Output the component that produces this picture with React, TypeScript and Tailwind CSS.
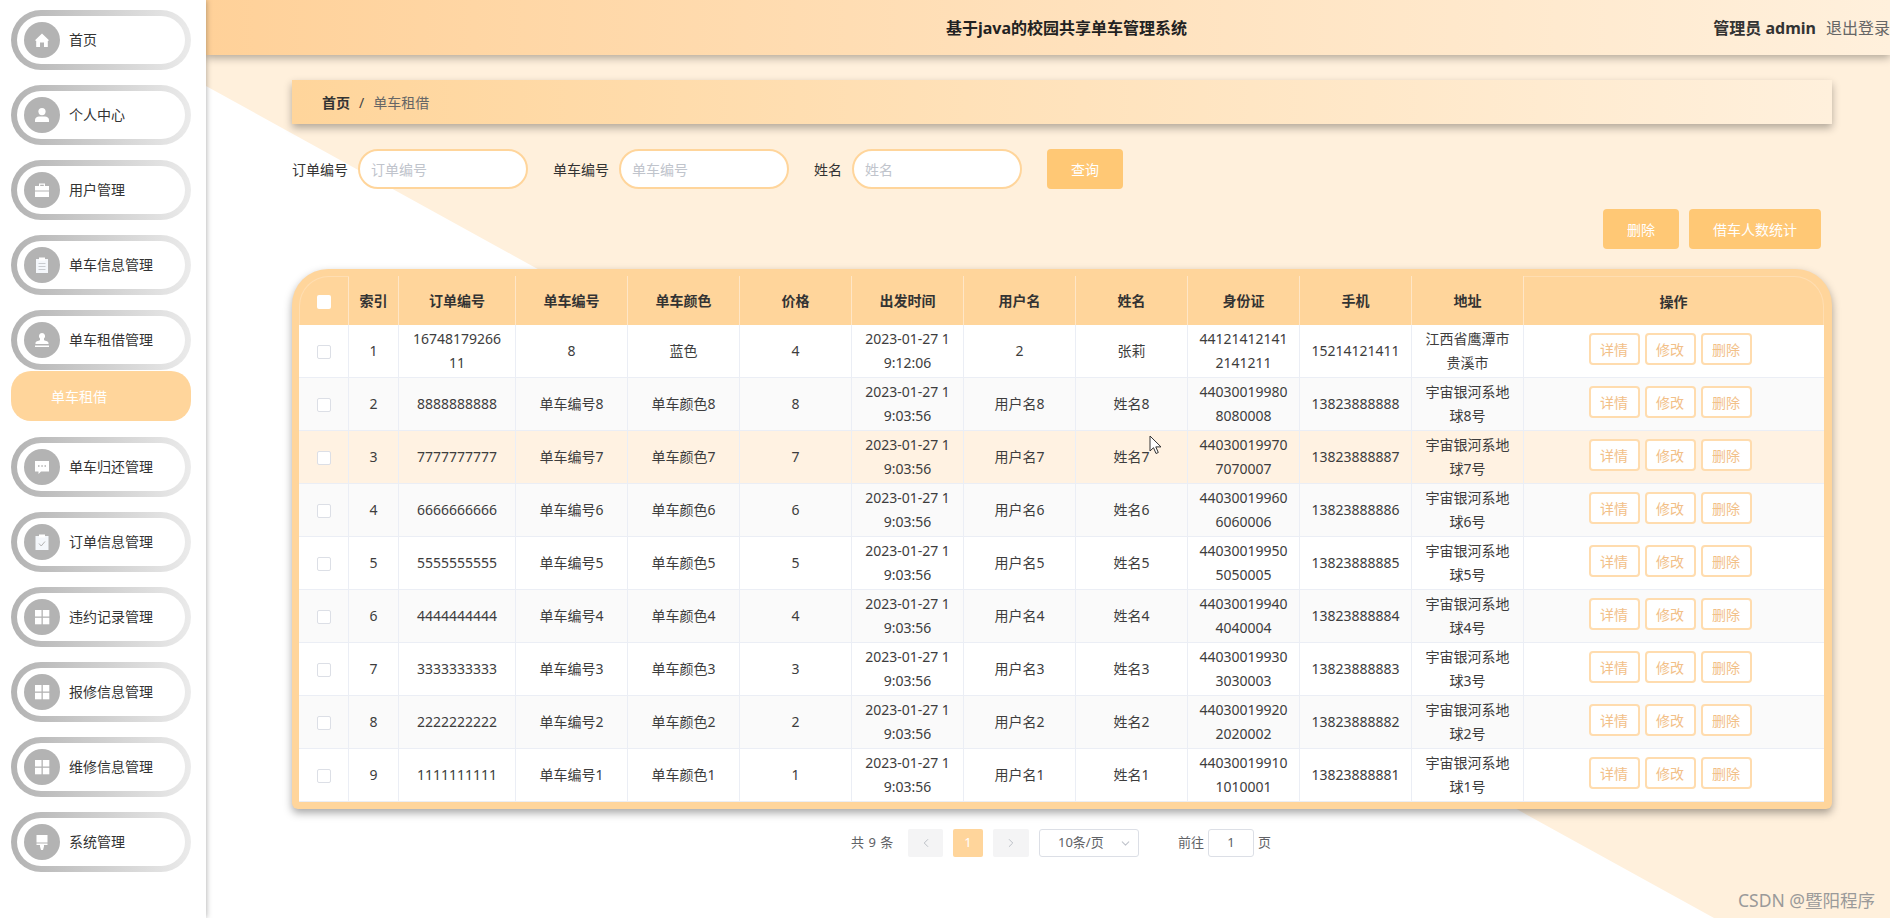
import React from 'react'
import { ChevronDown, ChevronLeft, ChevronRight } from 'lucide-react'

const HomeIcon = () => (
  <svg viewBox="0 0 16 16" className="h-[16px] w-[16px]" fill="#fff">
    <path d="M8 1.5 15 8.2 13.8 9V15H10V10.5H6V15H2.2V9L1 8.2Z" />
  </svg>
)
const UserIcon = () => (
  <svg viewBox="0 0 16 16" className="h-[16px] w-[16px]" fill="#fff">
    <circle cx="8" cy="4.6" r="3.6" />
    <path d="M1 15v-2c0-2.2 2-3.2 4-3.4h6c2 .2 4 1.2 4 3.4v2Z" />
  </svg>
)
const CaseIcon = () => (
  <svg viewBox="0 0 16 16" className="h-[16px] w-[16px]" fill="#fff">
    <path d="M5 4V1.5h6V4h-1.2V2.7H6.2V4Z" />
    <rect x="1" y="4" width="14" height="4.5" />
    <rect x="1" y="9.5" width="14" height="5.5" />
  </svg>
)
const ListIcon = () => (
  <svg viewBox="0 0 16 16" className="h-[16px] w-[16px]">
    <rect x="2" y="2" width="12" height="14" fill="#f4f7fb" />
    <rect x="5" y="0.5" width="6" height="3" fill="#fff" />
    <path d="M4.5 6.5h7M4.5 9.5h7M4.5 12.5h7" stroke="#c9ccd0" strokeWidth="1" />
  </svg>
)
const StampIcon = () => (
  <svg viewBox="0 0 16 16" className="h-[16px] w-[16px]" fill="#fff">
    <path d="M8 1a3.2 3.2 0 0 1 2 5.6V8c0 1 4.5.6 4.5 3v1h-13v-1c0-2.4 4.5-2 4.5-3V6.6A3.2 3.2 0 0 1 8 1Z" />
    <rect x="1" y="13.5" width="14" height="1.5" />
  </svg>
)
const ChatIcon = () => (
  <svg viewBox="0 0 16 16" className="h-[16px] w-[16px]">
    <path d="M1 2h14v10.5H7L4.5 15v-2.5H1Z" fill="#fff" />
    <path d="M4 7h1.5M7.3 7h1.5M10.5 7H12" stroke="#b3b3b3" strokeWidth="1.3" />
  </svg>
)
const ClaimIcon = () => (
  <svg viewBox="0 0 16 16" className="h-[16px] w-[16px]">
    <rect x="1.5" y="2" width="13" height="14" fill="#f4f7fb" />
    <rect x="5" y="0.5" width="6" height="3" fill="#fff" />
    <path d="M5 9.5 7.2 12 11 7.5" fill="none" stroke="#b3b3b3" strokeWidth="1" />
  </svg>
)
const GridIcon = () => (
  <svg viewBox="0 0 16 16" className="h-[16px] w-[16px]" fill="#fff">
    <rect x="1" y="1" width="6.5" height="6.5" />
    <rect x="8.8" y="1" width="6.5" height="6.5" />
    <rect x="1" y="8.8" width="6.5" height="6.5" />
    <rect x="8.8" y="8.8" width="6.5" height="6.5" />
  </svg>
)
const BrushIcon = () => (
  <svg viewBox="0 0 16 16" className="h-[16px] w-[16px]" fill="#fff">
    <path d="M2.5 1h11v7.5h-11ZM2.5 9.5h11V11H10v1.5L9 16H7l-1-3.5V11H2.5Z" />
  </svg>
)

const menus = [
  { name: '首页', icon: <HomeIcon /> },
  { name: '个人中心', icon: <UserIcon /> },
  { name: '用户管理', icon: <CaseIcon /> },
  { name: '单车信息管理', icon: <ListIcon /> },
  { name: '单车租借管理', icon: <StampIcon />, open: true },
  { name: '单车归还管理', icon: <ChatIcon /> },
  { name: '订单信息管理', icon: <ClaimIcon /> },
  { name: '违约记录管理', icon: <GridIcon /> },
  { name: '报修信息管理', icon: <GridIcon /> },
  { name: '维修信息管理', icon: <GridIcon /> },
  { name: '系统管理', icon: <BrushIcon /> },
]

const columns = ['索引', '订单编号', '单车编号', '单车颜色', '价格', '出发时间', '用户名', '姓名', '身份证', '手机', '地址']

const rows = [
  { id: 1, order: '1674817926611', bike: '8', color: '蓝色', price: 4, time: '2023-01-27 19:12:06', user: '2', name: '张莉', card: '441214121412141211', phone: '15214121411', addr: '江西省鹰潭市贵溪市' },
  ...[8, 7, 6, 5, 4, 3, 2, 1].map((n, i) => ({
    id: i + 2,
    order: String(n).repeat(10),
    bike: `单车编号${n}`,
    color: `单车颜色${n}`,
    price: n,
    time: '2023-01-27 19:03:56',
    user: `用户名${n}`,
    name: `姓名${n}`,
    card: `440300199${n}0${n}0${n}000${n}`,
    phone: `1382388888${n}`,
    addr: `宇宙银河系地球${n}号`,
  })),
]

const Field = ({ label, wrapClass }: { label: string; wrapClass: string }) => (
  <div className={`flex items-center ${wrapClass}`}>
    <span className="whitespace-nowrap text-[14px] text-[#333]">{label}</span>
    <input
      placeholder={label}
      className="ml-[10px] h-[40px] w-[170px] rounded-[20px] border-2 border-[#ffd59b] bg-white px-[11px] text-[14px] outline-none placeholder:text-[#c0c4cc]"
    />
  </div>
)

export default function App() {
  return (
    <div className="flex h-[918px] w-[1890px] overflow-hidden bg-white font-['Noto_Sans','Noto_Sans_CJK_SC',sans-serif] text-[#333]">
      {/* Sidebar */}
      <aside className="relative z-20 flex h-full w-[206px] shrink-0 flex-col gap-[15px] bg-white px-[11px] pt-[10px] shadow-[0_0_6px_rgba(0,0,0,0.35)]">
        {menus.map((m) => (
          <React.Fragment key={m.name}>
            <div className="h-[60px] w-[180px] shrink-0 rounded-full bg-gradient-to-r from-[#b3b3b3] to-[#ebebeb] p-[6px]">
              <div className="flex h-full items-center rounded-full bg-white pl-[7px]">
                <span className="flex h-[36px] w-[36px] items-center justify-center rounded-full bg-[#b3b3b3]">{m.icon}</span>
                <span className="mb-[2px] ml-[9px] text-[14px] text-[#333]">{m.name}</span>
              </div>
            </div>
            {m.open && (
              <div className="-mt-[14px] mb-px flex h-[50px] w-[180px] shrink-0 items-center rounded-[20px] bg-[#ffd59b] pl-[40px] text-[14px] text-white">
                单车租借
              </div>
            )}
          </React.Fragment>
        ))}
      </aside>

      {/* Main */}
      <main className="relative flex-1 overflow-hidden">
        <div className="absolute inset-0 bg-[#fff0dc] [clip-path:polygon(0_86px,1508px_918px,100%_918px,100%_0,0_0)]"></div>

        <div className="relative">
          <header className="flex h-[55px] items-center whitespace-nowrap bg-gradient-to-r from-[#ffd199] to-[#fff0dc] shadow-[0_3px_8px_rgba(0,0,0,0.3)]">
            <h1 className="ml-[740px] text-[16px] font-bold text-[#222]">基于java的校园共享单车管理系统</h1>
            <span className="ml-auto text-[16px] font-bold text-[#333]">管理员 admin</span>
            <span className="ml-[10px] text-[16px] text-[#666]">退出登录</span>
          </header>

          <div className="ml-[86px] mr-[58px]">
            <div className="mt-[25px] flex h-[44px] items-center bg-gradient-to-r from-[#ffd59b] to-[#fff0dc] pl-[30px] text-[14px] shadow-[0_4px_8px_rgba(0,0,0,0.3)]">
              <span className="font-bold text-[#333]">首页</span>
              <span className="mx-[9px] text-[#444]">/</span>
              <span className="text-[#666]">单车租借</span>
            </div>

            <div className="mt-[25px] flex h-[40px] items-center">
              <Field label="订单编号" wrapClass="" />
              <Field label="单车编号" wrapClass="ml-[25px]" />
              <Field label="姓名" wrapClass="ml-[25px]" />
              <button className="ml-[25px] h-[40px] w-[76px] rounded-[4px] bg-[#ffc875] text-[14px] text-white">查询</button>
            </div>

            <div className="mt-[20px] flex h-[40px] justify-end gap-[10px] pr-[11px]">
              <button className="w-[76px] rounded-[4px] bg-[#ffc875] text-[14px] text-white">删除</button>
              <button className="w-[132px] rounded-[4px] bg-[#ffc875] text-[14px] text-white">借车人数统计</button>
            </div>

            {/* Table */}
            <div className="mt-[20px] h-[540px] rounded-t-[36px] rounded-b-[6px] bg-[#ffd59b] p-[7px] shadow-[0_4px_8px_rgba(0,0,0,0.35)]">
              <table className="w-[1525px] table-fixed border-separate border-spacing-0 text-center text-[14px]">
                <colgroup>
                  <col className="w-[50px]" />
                  <col className="w-[50px]" />
                  <col className="w-[117px]" />
                  {[0, 1, 2, 3, 4, 5, 6, 7, 8].map((c) => (
                    <col key={c} className="w-[112px]" />
                  ))}
                  <col className="w-[300px]" />
                </colgroup>
                <thead>
                  <tr>
                    <th className="h-[49px] rounded-tl-[30px] border-t border-l border-r border-[#ffe6c6] border-t-[#ffdeb2] border-l-[#ffdeb2] p-0">
                      <span className="inline-block h-[14px] w-[14px] translate-y-[2px] rounded-[2px] bg-white"></span>
                    </th>
                    {columns.map((c) => (
                      <th key={c} className="h-[49px] border-r border-[#ffe6c6] p-0 font-bold text-[#333]">
                        {c}
                      </th>
                    ))}
                    <th className="h-[49px] rounded-tr-[30px] border-t border-r border-t-[#ffdeb2] border-r-[#ffdeb2] p-0 font-bold text-[#333]">操作</th>
                  </tr>
                </thead>
                <tbody>
                  {rows.map((r) => {
                    const bg = r.id === 3 ? 'bg-[#fff2e2]' : r.id % 2 === 0 ? 'bg-[#fafafa]' : 'bg-white'
                    const cells = [r.id, r.order, r.bike, r.color, r.price, r.time, r.user, r.name, r.card, r.phone, r.addr]
                    return (
                      <tr key={r.id} className={bg}>
                        <td className="h-[53px] border-r border-b border-[#ebeef5] p-0">
                          <span className="inline-block h-[14px] w-[14px] translate-y-[2px] rounded-[2px] border border-[#dcdfe6] bg-white"></span>
                        </td>
                        {cells.map((c, i) => (
                          <td key={i} className="h-[53px] border-r border-b border-[#ebeef5] p-0">
                            <div className="break-all px-[10px] leading-[24px] text-[#3d3d3d]">{c}</div>
                          </td>
                        ))}
                        <td className="h-[53px] border-b border-[#ebeef5] p-0">
                          <div className="mb-[4px] flex justify-center gap-[5px] pr-[8px]">
                            {['详情', '修改', '删除'].map((b) => (
                              <button key={b} className="h-[32px] w-[51px] rounded-[4px] border-2 border-[#ffdcae] bg-white text-[14px] text-[#f2c088]">
                                {b}
                              </button>
                            ))}
                          </div>
                        </td>
                      </tr>
                    )
                  })}
                </tbody>
              </table>
            </div>

            {/* Pagination */}
            <div className="mt-[20px] flex h-[28px] items-center whitespace-nowrap pl-[559px] text-[13px] text-[#606266]">
              <span className="w-[42px] [word-spacing:1px]">共 9 条</span>
              <span className="ml-[15px] flex h-[28px] w-[35px] items-center justify-center rounded-[2px] bg-[#f4f4f5] text-[#b4b8bf]">
                <ChevronLeft size={14} strokeWidth={1.5} />
              </span>
              <span className="ml-[10px] flex h-[28px] w-[30px] items-center justify-center rounded-[2px] bg-[#ffd59b] text-white">1</span>
              <span className="ml-[10px] flex h-[28px] w-[36px] items-center justify-center rounded-[2px] bg-[#f4f4f5] text-[#b4b8bf]">
                <ChevronRight size={14} strokeWidth={1.5} />
              </span>
              <span className="ml-[10px] flex h-[28px] w-[100px] items-center justify-between rounded-[3px] border border-[#dcdfe6] bg-white pl-[18px] pr-[6px]">
                10条/页
                <ChevronDown size={13} className="text-[#c0c4cc]" />
              </span>
              <span className="ml-[39px]">前往</span>
              <span className="ml-[4px] flex h-[28px] w-[46px] items-center justify-center rounded-[3px] border border-[#dcdfe6] bg-white">1</span>
              <span className="ml-[4px]">页</span>
            </div>
          </div>
        </div>
      </main>

      {/* Overlays from the capture: mouse pointer and watermark */}
      <svg viewBox="0 0 14 20" className="absolute left-[1149px] top-[435px] z-30 h-[20px] w-[14px]">
        <path d="M1 1v15l3.5-3.3 2.5 5.8 2.3-1-2.500-5.600H12Z" fill="#fff" stroke="#333" strokeWidth="1" />
      </svg>
      <span className="absolute left-[1738px] top-[887px] z-30 text-[17.5px] text-[#9a9a9a]">CSDN @暨阳程序</span>
    </div>
  )
}
